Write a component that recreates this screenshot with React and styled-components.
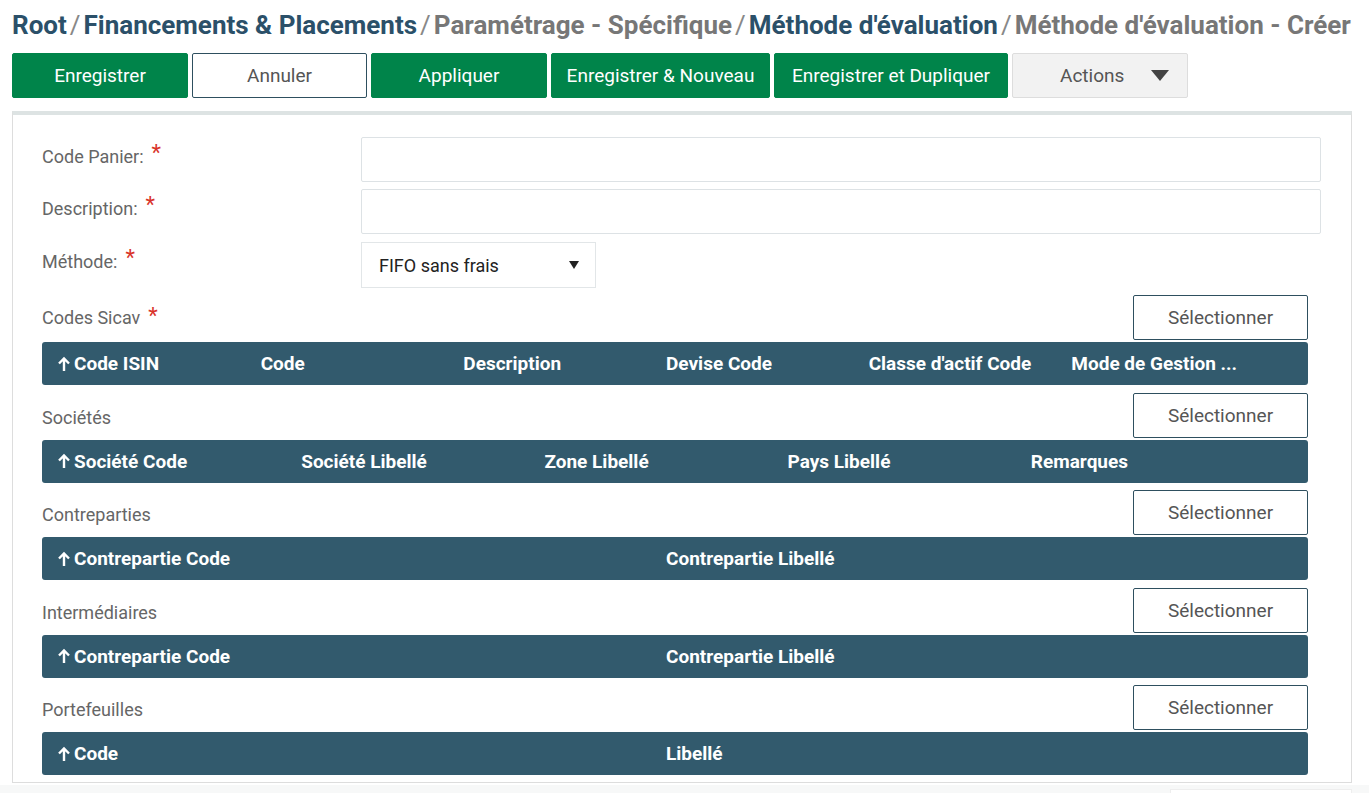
import React from 'react';
import styled, { createGlobalStyle } from 'styled-components';

const GlobalStyle = createGlobalStyle`
  html, body {
    margin: 0;
    padding: 0;
    background: #ffffff;
    font-family: Roboto, "Liberation Sans", sans-serif;
  }
  * { box-sizing: border-box; }
`;

const sections = [
  { label: 'Codes Sicav', required: true, columns: ['Code ISIN', 'Code', 'Description', 'Devise Code', "Classe d'actif Code", 'Mode de Gestion ...'] },
  { label: 'Sociétés', columns: ['Société Code', 'Société Libellé', 'Zone Libellé', 'Pays Libellé', 'Remarques'] },
  { label: 'Contreparties', columns: ['Contrepartie Code', 'Contrepartie Libellé'] },
  { label: 'Intermédiaires', columns: ['Contrepartie Code', 'Contrepartie Libellé'] },
  { label: 'Portefeuilles', columns: ['Code', 'Libellé'] },
];

const SortArrow = () => (
  <ArrowIcon viewBox="0 0 12 16" width="12" height="16">
    <path d="M6 15V2.5M1 7.5L6 2.5L11 7.5" fill="none" stroke="#ffffff" strokeWidth="2.4" />
  </ArrowIcon>
);

const App = () => (
  <>
    <GlobalStyle />
    <Page>
      <Breadcrumb>
        <Crumb>Root</Crumb><Sep>/</Sep>
        <Crumb>Financements &amp; Placements</Crumb><Sep>/</Sep>
        <Crumb muted>Paramétrage - Spécifique</Crumb><Sep>/</Sep>
        <Crumb>Méthode d'évaluation</Crumb><Sep>/</Sep>
        <Crumb muted>Méthode d'évaluation - Créer</Crumb>
      </Breadcrumb>
      <Toolbar>
        <Button width="176px">Enregistrer</Button>
        <Button width="175px" variant="outline">Annuler</Button>
        <Button width="176px">Appliquer</Button>
        <Button width="219px">Enregistrer &amp; Nouveau</Button>
        <Button width="234px">Enregistrer et Dupliquer</Button>
        <ActionsButton>
          <span>Actions</span>
          <Caret />
        </ActionsButton>
      </Toolbar>
      <Panel>
        <Field>
          <Label>Code Panier:<Star>*</Star></Label>
          <Input />
        </Field>
        <Field>
          <Label>Description:<Star>*</Star></Label>
          <Input />
        </Field>
        <Field>
          <Label>Méthode:<Star>*</Star></Label>
          <Select>
            <span>FIFO sans frais</span>
            <SmallCaret />
          </Select>
        </Field>
        {sections.map((s) => (
          <Section key={s.label}>
            <SectionHead>
              <SectionLabel>{s.label}{s.required && <Star>*</Star>}</SectionLabel>
              <SelectButton>Sélectionner</SelectButton>
            </SectionHead>
            <GridHeader cols={s.columns.length}>
              {s.columns.map((c, i) => (
                <HeaderCell key={c + i}>{i === 0 && <SortArrow />}{c}</HeaderCell>
              ))}
            </GridHeader>
          </Section>
        ))}
      </Panel>
      <Footer>
        <FooterBox />
      </Footer>
    </Page>
  </>
);

const Page = styled.div`
  padding: 0 0 0 12px;
  width: 1369px;
`;

const Breadcrumb = styled.div`
  height: 50px;
  line-height: 50px;
  font-size: 26px;
  font-weight: 700;
  white-space: nowrap;
  overflow: hidden;
`;

const Crumb = styled.span`
  color: ${(p) => (p.muted ? '#777777' : '#2b5069')};
`;

const Sep = styled.span`
  color: #888;
  font-weight: 400;
  margin: 0 3px;
`;

const Toolbar = styled.div`
  display: flex;
  gap: 4px;
  margin-top: 3px;
`;

const Button = styled.button`
  width: ${(p) => p.width};
  height: 45px;
  border-radius: 2px;
  font-family: inherit;
  font-size: 19px;
  cursor: pointer;
  background: ${(p) => (p.variant === 'outline' ? '#ffffff' : '#00844a')};
  color: ${(p) => (p.variant === 'outline' ? '#555555' : '#ffffff')};
  border: 1px solid ${(p) => (p.variant === 'outline' ? '#2e4f5f' : '#00844a')};
  white-space: nowrap;
  padding: 0;
`;

const ActionsButton = styled.button`
  width: 176px;
  height: 45px;
  display: flex;
  align-items: center;
  justify-content: space-between;
  padding: 0 18px 0 47px;
  background: #f2f2f2;
  border: 1px solid #dddddd;
  border-radius: 2px;
  font-family: inherit;
  font-size: 19px;
  color: #555555;
`;

const Caret = styled.span`
  width: 0;
  height: 0;
  border-left: 9px solid transparent;
  border-right: 9px solid transparent;
  border-top: 11px solid #444444;
`;

const SmallCaret = styled.span`
  width: 0;
  height: 0;
  border-left: 5px solid transparent;
  border-right: 5px solid transparent;
  border-top: 8px solid #222222;
`;

const Panel = styled.div`
  margin-top: 13px;
  width: 1340px;
  border: 1px solid #dddddd;
  border-top: 4px solid #dde3e3;
  padding: 22px 30px 7px 29px;
`;

const Field = styled.div`
  display: flex;
  align-items: flex-start;
  margin-bottom: 7px;
  &:nth-child(2) { margin-bottom: 8px; }
`;

const Label = styled.div`
  width: 319px;
  padding-top: 8px;
  line-height: 24px;
  font-size: 18px;
  color: #666666;
`;

const Star = styled.span`
  color: #d9342b;
  font-size: 22px;
  vertical-align: top;
  position: relative;
  top: -4px;
  margin-left: 8px;
`;

const Input = styled.div`
  flex: 1;
  height: 45px;
  border: 1px solid #dde2e5;
  border-radius: 2px;
`;

const Select = styled.div`
  width: 235px;
  height: 46px;
  display: flex;
  align-items: center;
  justify-content: space-between;
  padding: 0 16px 0 17px;
  border: 1px solid #e2e6e8;
  font-size: 18px;
  color: #222222;
`;

const Section = styled.div`
  width: 1266px;
  margin-bottom: 7.5px;
  &:last-child { margin-bottom: 0; }
`;

const SectionHead = styled.div`
  display: flex;
  align-items: center;
  justify-content: space-between;
  margin-bottom: 2px;
`;

const SectionLabel = styled.div`
  font-size: 18px;
  color: #666666;
  padding-top: 4px;
`;

const SelectButton = styled.button`
  width: 175px;
  height: 45px;
  background: #ffffff;
  border: 1px solid #2e4f5f;
  border-radius: 2px;
  font-family: inherit;
  font-size: 19px;
  color: #555555;
`;

const GridHeader = styled.div`
  display: grid;
  grid-template-columns: repeat(${(p) => p.cols}, 1fr);
  align-items: center;
  height: 43px;
  padding: 0 34px 0 16px;
  background: #325a6d;
  border-radius: 3px;
`;

const HeaderCell = styled.div`
  display: flex;
  align-items: center;
  color: #ffffff;
  font-weight: 700;
  font-size: 19px;
  white-space: nowrap;
`;

const ArrowIcon = styled.svg`
  margin-right: 4px;
  flex-shrink: 0;
`;

const Footer = styled.div`
  margin-top: 2px;
  margin-left: -12px;
  height: 20px;
  background: #f7f8f8;
  padding-left: 1170px;
  padding-top: 4px;
`;

const FooterBox = styled.div`
  width: 182px;
  height: 16px;
  background: #ffffff;
  border: 1px solid #eeeeee;
`;

export default App;
